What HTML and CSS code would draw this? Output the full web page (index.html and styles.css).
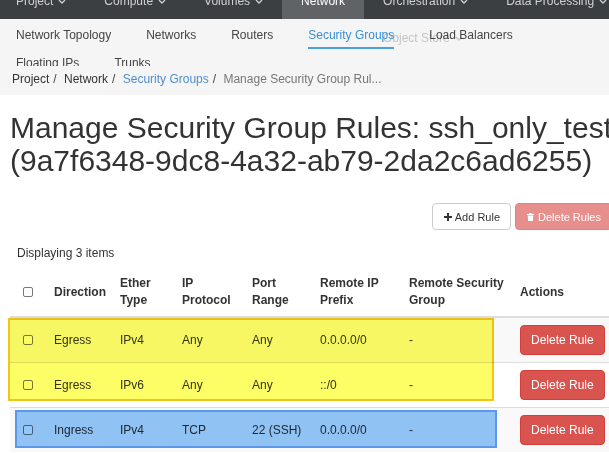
FILE: index.html
```html
<!DOCTYPE html>
<html>
<head>
<meta charset="utf-8">
<link rel="stylesheet" href="styles.css">
</head>
<body>
<nav class="topnav">
  <a class="tab">Project<svg class="chev" viewBox="0 0 8 5"><polyline points="1,1 4,4 7,1"/></svg></a>
  <a class="tab">Compute<svg class="chev" viewBox="0 0 8 5"><polyline points="1,1 4,4 7,1"/></svg></a>
  <a class="tab">Volumes<svg class="chev" viewBox="0 0 8 5"><polyline points="1,1 4,4 7,1"/></svg></a>
  <a class="tab active">Network</a>
  <a class="tab">Orchestration<svg class="chev" viewBox="0 0 8 5"><polyline points="1,1 4,4 7,1"/></svg></a>
  <a class="tab">Data Processing<svg class="chev" viewBox="0 0 8 5"><polyline points="1,1 4,4 7,1"/></svg></a>
</nav>
<nav class="subnav">
  <span class="ghost">Object Store<svg class="chev" viewBox="0 0 8 5"><polyline points="1,1 4,4 7,1"/></svg></span>
  <a>Network Topology</a>
  <a>Networks</a>
  <a>Routers</a>
  <a class="active">Security Groups</a>
  <a>Load Balancers</a>
  <a>Floating IPs</a>
  <a>Trunks</a>
</nav>
<ol class="breadcrumb">
  <li>Project</li>
  <li>Network</li>
  <li class="link">Security Groups</li>
  <li class="current">Manage Security Group Rul...</li>
</ol>
<main class="content">
  <h1 class="title">Manage Security Group Rules: ssh_only_test (9a7f6348-9dc8-4a32-ab79-2da2c6ad6255)</h1>
  <div class="toolbar">
    <button class="btn btn-default"><svg class="ico-plus" viewBox="0 0 8 8"><rect x="3" y="0" width="2" height="8"/><rect x="0" y="3" width="8" height="2"/></svg>Add Rule</button>
    <button class="btn btn-danger-disabled"><svg class="ico-trash" viewBox="0 0 8 9"><rect x="2.6" y="0" width="2.8" height="1.2"/><rect x="0" y="1" width="8" height="1.3"/><path d="M0.8 2.8 H7.2 L6.7 9 H1.3 Z"/></svg>Delete Rules</button>
  </div>
  <div class="count">Displaying 3 items</div>
  <div class="table-wrap">
    <table class="rules">
      <colgroup>
        <col class="c-chk"><col class="c-dir"><col class="c-eth"><col class="c-proto"><col class="c-port"><col class="c-prefix"><col class="c-group"><col class="c-act">
      </colgroup>
      <thead>
        <tr>
          <th><span class="chk"></span></th>
          <th>Direction</th>
          <th>Ether Type</th>
          <th>IP Protocol</th>
          <th>Port Range</th>
          <th>Remote IP Prefix</th>
          <th>Remote Security Group</th>
          <th>Actions</th>
        </tr>
      </thead>
      <tbody>
        <tr>
          <td><span class="chk"></span></td>
          <td>Egress</td><td>IPv4</td><td>Any</td><td>Any</td><td>0.0.0.0/0</td><td>-</td>
          <td><button class="btn btn-danger">Delete Rule</button></td>
        </tr>
        <tr>
          <td><span class="chk"></span></td>
          <td>Egress</td><td>IPv6</td><td>Any</td><td>Any</td><td>::/0</td><td>-</td>
          <td><button class="btn btn-danger">Delete Rule</button></td>
        </tr>
        <tr>
          <td><span class="chk"></span></td>
          <td>Ingress</td><td>IPv4</td><td>TCP</td><td>22 (SSH)</td><td>0.0.0.0/0</td><td>-</td>
          <td><button class="btn btn-danger">Delete Rule</button></td>
        </tr>
      </tbody>
    </table>
    <div class="hl hl-yellow"></div>
    <div class="hl hl-blue"></div>
  </div>
</main>
</body>
</html>
```
FILE: styles.css
```css
html, body {
  margin: 0;
  padding: 0;
  overflow: hidden;
}
body {
  width: 609px;
  height: 453px;
  background: #fff;
  color: #333;
  font-family: "Liberation Sans", Arial, Helvetica, sans-serif;
  font-size: 12px;
}

/* top navigation */
.topnav {
  display: flex;
  align-items: flex-end;
  height: 19px;
  overflow: hidden;
  background: #3c3f42;
}
.topnav .tab {
  display: flex;
  align-items: center;
  flex: none;
  height: 36px;
  padding: 0 19px;
  color: #cfd0d1;
  font-size: 12px;
  white-space: nowrap;
}
.topnav .tab:first-child {
  padding-left: 16px;
}
.topnav .tab.active {
  background: #606366;
  color: #fff;
}
.chev {
  width: 8px;
  height: 5px;
  margin-left: 5px;
  fill: none;
  stroke: currentColor;
  stroke-width: 1.3;
}

/* secondary navigation */
.subnav {
  position: relative;
  display: flex;
  flex-wrap: wrap;
  column-gap: 35px;
  height: 45px;
  padding: 2px 0 0 16px;
  background: #f5f5f5;
  overflow: hidden;
}
.subnav a {
  position: relative;
  font-size: 12px;
  line-height: 16px;
  padding: 6px 0 4px;
  border-bottom: 2px solid transparent;
  color: #444;
  white-space: nowrap;
}
.subnav a.active {
  color: #3a8fd4;
  border-bottom-color: #4aa0de;
}
.ghost {
  position: absolute;
  left: 383px;
  top: 11px;
  display: flex;
  align-items: center;
  line-height: 16px;
  color: #c4c4c4;
  white-space: nowrap;
}

/* breadcrumb */
.breadcrumb {
  display: flex;
  margin: 0;
  padding: 5px 12px 7px;
  list-style: none;
  background: #f5f5f5;
  line-height: 17px;
  font-size: 12px;
}
.breadcrumb li + li::before {
  content: "/\00a0";
  padding: 0 4px;
  color: #444;
}
.breadcrumb .link {
  color: #4f8ecf;
}
.breadcrumb .current {
  color: #777;
}

/* content */
.content {
  padding: 0 0 0 10px;
  width: 602px;
}
.title {
  margin: 16px -40px 0 0;
  font-size: 30px;
  line-height: 33px;
  font-weight: 400;
  color: #333;
}
.toolbar {
  display: flex;
  justify-content: flex-end;
  gap: 4px;
  margin-top: 26px;
}
.btn {
  display: inline-flex;
  align-items: center;
  border: 1px solid transparent;
  border-radius: 4px;
  font-family: inherit;
  white-space: nowrap;
  cursor: pointer;
}
.toolbar .btn {
  height: 27px;
  padding: 0 10px 0 11px;
  font-size: 11px;
}
.btn-default {
  background: #fff;
  border-color: #ccc;
  color: #333;
}
.btn-danger-disabled {
  background: #e68f8c;
  border-color: #e3857f;
  color: #fff;
}
.ico-plus {
  width: 8px;
  height: 8px;
  margin-right: 3px;
  fill: #333;
}
.ico-trash {
  width: 7px;
  height: 8px;
  margin-right: 4px;
  fill: #fff;
}
.count {
  margin-top: 15px;
  padding-left: 7px;
  line-height: 17px;
}

/* table */
.table-wrap {
  position: relative;
  margin-top: 5px;
}
.rules {
  width: 100%;
  border-collapse: collapse;
  table-layout: fixed;
}
.c-chk { width: 36px; }
.c-dir { width: 66px; }
.c-eth { width: 62px; }
.c-proto { width: 70px; }
.c-port { width: 68px; }
.c-prefix { width: 89px; }
.c-group { width: 111px; }
.rules th,
.rules td {
  text-align: left;
  vertical-align: middle;
  white-space: normal;
}
.rules th {
  padding: 8px 8px 7px;
  line-height: 17px;
  font-weight: bold;
  border-bottom: 2px solid #ddd;
}
.rules td {
  padding: 7px 8px;
  line-height: 16px;
  border-top: 1px solid #ddd;
}
.rules tbody tr:nth-child(odd) td {
  background: #f9f9f9;
}
.chk {
  display: block;
  width: 8px;
  height: 8px;
  margin-left: 5px;
  border: 1px solid #777;
  border-radius: 2px;
  background: #fff;
}
.btn-danger {
  height: 30px;
  padding: 0 10px;
  font-size: 12px;
  background: #d9534f;
  border-color: #d43f3a;
  color: #fff;
}

/* annotation highlights */
.hl {
  position: absolute;
  box-sizing: border-box;
  pointer-events: none;
  mix-blend-mode: multiply;
}
.hl-yellow {
  left: -2px;
  top: 51px;
  width: 486px;
  height: 83px;
  border: 2px solid #f3c419;
  background: #fdfd66;
}
.hl-blue {
  left: 5px;
  top: 143px;
  width: 482px;
  height: 38px;
  border: 2px solid #5d9cf2;
  background: #95c7fa;
}
```
